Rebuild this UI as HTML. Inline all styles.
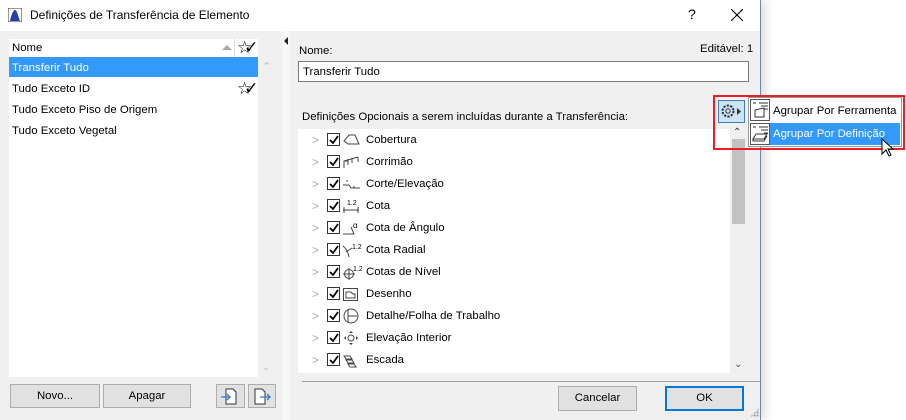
<!DOCTYPE html>
<html><head><meta charset="utf-8"><style>
*{margin:0;padding:0;box-sizing:border-box}
body{width:906px;height:420px;background:#fff;font-family:"Liberation Sans",sans-serif;font-size:11.4px;line-height:15px;color:#000;position:relative;overflow:hidden}
.a{position:absolute}
.win{left:0;top:0;width:761px;height:420px;background:#f0f0f0;border-right:1px solid #6d8aa6;box-shadow:4px 0 10px rgba(0,0,0,.15)}
.title{left:0;top:0;width:760px;height:31px;background:#fff}
.btn{position:absolute;background:#e1e1e1;border:1px solid #adadad;text-align:center}
.row{position:absolute;left:0;height:22px;width:420px}
.row .chev{position:absolute;left:14px;top:4px;color:#aaa;font-size:12px}
.row .cb{position:absolute;left:29px;top:4px;width:13px;height:13px;border:1px solid #333;background:#fff}
.row .cb svg{position:absolute;left:0;top:0}
.row .ic{position:absolute;left:44px;top:3px}
.row .t{position:absolute;left:68px;top:4px}
.star{font-size:17px;letter-spacing:-8px;line-height:1}
</style></head><body>
<div class="a win"></div>
<div class="a title"></div>
<svg class="a" style="left:8px;top:8px" width="14" height="14"><rect x="0" y="0" width="14" height="14" fill="#fff" stroke="#333"/><path d="M2 13 C4 4 6 2 7 2 C9 2 10 8 12 13Z" fill="#2a3ea8"/></svg>
<div class="a" style="left:30px;top:8px;font-size:12px">Definições de Transferência de Elemento</div>
<div class="a" style="left:688px;top:7px;font-size:14px">?</div>
<svg class="a" style="left:731px;top:9px" width="12" height="12"><path d="M0 0L12 12M12 0L0 12" stroke="#000" stroke-width="1.1"/></svg>

<div class="a" style="left:9px;top:39px;width:249px;height:338px;background:#fff"></div>
<div class="a" style="left:12px;top:41px">Nome</div>
<div class="a" style="left:222px;top:45px;width:0;height:0;border-left:5px solid transparent;border-right:5px solid transparent;border-bottom:5px solid #aaa"></div>
<div class="a" style="left:234px;top:39px;width:1px;height:18px;background:#ddd"></div>
<div class="a star" style="left:237px;top:39px">☆✓</div>
<div class="a" style="left:9px;top:57px;width:249px;height:20px;background:#3399ff"></div>
<div class="a" style="left:12px;top:61px;color:#fff">Transferir Tudo</div>
<div class="a" style="left:12px;top:82px">Tudo Exceto ID</div>
<div class="a star" style="left:237px;top:80px">☆✓</div>
<div class="a" style="left:12px;top:103px">Tudo Exceto Piso de Origem</div>
<div class="a" style="left:12px;top:124px">Tudo Exceto Vegetal</div>
<div class="a" style="left:262px;top:60px;color:#bbb;font-size:11px">⌃</div>
<div class="a" style="left:262px;top:360px;color:#bbb;font-size:10px">⌄</div>

<div class="btn" style="left:10px;top:384px;width:90px;height:24px;line-height:22px">Novo...</div>
<div class="btn" style="left:103px;top:384px;width:88px;height:24px;line-height:22px">Apagar</div>
<div class="btn" style="left:216px;top:384px;width:29px;height:24px"><svg width="27" height="22"><path d="M9 4h7l3 3v12H9z" fill="#fff" stroke="#333"/><path d="M4 12h9M10 9l3 3-3 3" stroke="#2a7ae2" fill="none" stroke-width="1.3"/></svg></div>
<div class="btn" style="left:248px;top:384px;width:28px;height:24px"><svg width="26" height="22"><path d="M6 4h7l3 3v12H6z" fill="#fff" stroke="#333"/><path d="M11 12h10M18 9l3 3-3 3" stroke="#2a7ae2" fill="none" stroke-width="1.3"/></svg></div>

<div class="a" style="left:282px;top:31px;width:8px;height:389px;background:#f7f7f7"></div>
<div class="a" style="left:284px;top:37px;width:0;height:0;border-top:4px solid transparent;border-bottom:4px solid transparent;border-right:4px solid #222"></div>

<div class="a" style="left:299px;top:44px">Nome:</div>
<div class="a" style="left:700px;top:42px">Editável: 1</div>
<div class="a" style="left:298px;top:61px;width:451px;height:21px;background:#fff;border:1px solid #7a7a7a"></div>
<div class="a" style="left:303px;top:65px">Transferir Tudo</div>
<div class="a" style="left:302px;top:110px">Definições Opcionais a serem incluídas durante a Transferência:</div>

<div class="a" style="left:298px;top:129px;width:448px;height:244px;background:#fff">
 <div class="a" style="left:432px;top:0;width:16px;height:244px;background:#f0f0f0"></div>
 <div class="a" style="left:434px;top:10px;width:13px;height:85px;background:#c2c2c2"></div>
 <div class="a" style="left:436px;top:228px;font-size:10px;color:#555">⌄</div>
</div>
<div class="a" style="left:298px;top:129px;width:432px;height:244px">
<div class="row" style="top:0"><span class="chev">&gt;</span><span class="cb"><svg width="12" height="12"><path d="M2 6l3 3 5-7" stroke="#000" stroke-width="1.8" fill="none"/></svg></span><svg class="ic" width="20" height="16"><path d="M2 9l5-6h6l4 9H6z" fill="none" stroke="#444"/></svg><span class="t">Cobertura</span></div>
<div class="row" style="top:22px"><span class="chev">&gt;</span><span class="cb"><svg width="12" height="12"><path d="M2 6l3 3 5-7" stroke="#000" stroke-width="1.8" fill="none"/></svg></span><svg class="ic" width="20" height="16"><path d="M2 14V7l14-4M2 7h4M6 5v6M10 4v5M16 3v5" fill="none" stroke="#444"/></svg><span class="t">Corrimão</span></div>
<div class="row" style="top:44px"><span class="chev">&gt;</span><span class="cb"><svg width="12" height="12"><path d="M2 6l3 3 5-7" stroke="#000" stroke-width="1.8" fill="none"/></svg></span><svg class="ic" width="20" height="16"><path d="M1 9h6l2 3h9M4 5h2M12 10v2" fill="none" stroke="#444"/></svg><span class="t">Corte/Elevação</span></div>
<div class="row" style="top:66px"><span class="chev">&gt;</span><span class="cb"><svg width="12" height="12"><path d="M2 6l3 3 5-7" stroke="#000" stroke-width="1.8" fill="none"/></svg></span><svg class="ic" width="20" height="16"><text x="5" y="7" font-size="7" font-family="Liberation Sans">1.2</text><path d="M1 12h16M2 9v6M16 9v6" stroke="#444"/></svg><span class="t">Cota</span></div>
<div class="row" style="top:88px"><span class="chev">&gt;</span><span class="cb"><svg width="12" height="12"><path d="M2 6l3 3 5-7" stroke="#000" stroke-width="1.8" fill="none"/></svg></span><svg class="ic" width="20" height="16"><path d="M1 14h11L9 7" fill="none" stroke="#444"/><text x="11" y="8" font-size="8">α</text></svg><span class="t">Cota de Ângulo</span></div>
<div class="row" style="top:110px"><span class="chev">&gt;</span><span class="cb"><svg width="12" height="12"><path d="M2 6l3 3 5-7" stroke="#000" stroke-width="1.8" fill="none"/></svg></span><svg class="ic" width="20" height="16"><path d="M1 4q5 4 6 11M4 10l6-4" fill="none" stroke="#444"/><text x="10" y="7" font-size="7">1.2</text></svg><span class="t">Cota Radial</span></div>
<div class="row" style="top:132px"><span class="chev">&gt;</span><span class="cb"><svg width="12" height="12"><path d="M2 6l3 3 5-7" stroke="#000" stroke-width="1.8" fill="none"/></svg></span><svg class="ic" width="20" height="16"><circle cx="7" cy="10" r="4.5" fill="none" stroke="#444"/><path d="M1 10h12M7 4v12" stroke="#444"/><text x="11" y="7" font-size="7">1.2</text></svg><span class="t">Cotas de Nível</span></div>
<div class="row" style="top:154px"><span class="chev">&gt;</span><span class="cb"><svg width="12" height="12"><path d="M2 6l3 3 5-7" stroke="#000" stroke-width="1.8" fill="none"/></svg></span><svg class="ic" width="20" height="16"><rect x="1.5" y="2.5" width="14" height="12" fill="none" stroke="#444"/><path d="M4 12V6h5l2 2h2v4z" fill="none" stroke="#444"/></svg><span class="t">Desenho</span></div>
<div class="row" style="top:176px"><span class="chev">&gt;</span><span class="cb"><svg width="12" height="12"><path d="M2 6l3 3 5-7" stroke="#000" stroke-width="1.8" fill="none"/></svg></span><svg class="ic" width="20" height="16"><circle cx="9" cy="8" r="7" fill="none" stroke="#444"/><path d="M6 1.5v13M6 8h9" stroke="#444"/></svg><span class="t">Detalhe/Folha de Trabalho</span></div>
<div class="row" style="top:198px"><span class="chev">&gt;</span><span class="cb"><svg width="12" height="12"><path d="M2 6l3 3 5-7" stroke="#000" stroke-width="1.8" fill="none"/></svg></span><svg class="ic" width="20" height="16"><circle cx="9" cy="8" r="3" fill="none" stroke="#444"/><path d="M9 1l-2 2h4zM9 15l-2-2h4zM2 8l2-2v4zM16 8l-2-2v4z" fill="#444"/></svg><span class="t">Elevação Interior</span></div>
<div class="row" style="top:220px"><span class="chev">&gt;</span><span class="cb"><svg width="12" height="12"><path d="M2 6l3 3 5-7" stroke="#000" stroke-width="1.8" fill="none"/></svg></span><svg class="ic" width="20" height="16"><path d="M2 4h6l2 3h-6zM4 8h6l2 3H6zM6 12h6l2 3H8z" fill="none" stroke="#444"/></svg><span class="t">Escada</span></div>
</div>

<div class="a" style="left:302px;top:381px;width:458px;height:1px;background:#a0a0a0"></div>
<div class="btn" style="left:558px;top:386px;width:79px;height:25px;line-height:23px">Cancelar</div>
<div class="btn" style="left:665px;top:386px;width:79px;height:25px;line-height:21px;border:2px solid #0078d7">OK</div>

<div class="a" style="left:713px;top:95px;width:192px;height:55px;border:2px solid #ee1c24"></div>
<div class="a" style="left:718px;top:100px;width:27px;height:23px;background:#cce4f7;border:1px solid #3c7fb1"></div>
<svg class="a" style="left:720px;top:103px" width="24" height="17"><circle cx="8" cy="8" r="5.5" fill="none" stroke="#333" stroke-dasharray="2.2 1.3" stroke-width="2"/><circle cx="8" cy="8" r="2.2" fill="none" stroke="#333"/><path d="M17 5l4 3.5-4 3.5z" fill="#333"/></svg>
<div class="a" style="left:733px;top:125px;color:#333;font-size:10px">⌃</div>
<div class="a" style="left:748px;top:97px;width:154px;height:50px;background:#fff;border:1px solid #999"></div>
<div class="a" style="left:750px;top:99px;width:20px;height:22px;border:1px solid #555;background:#fff"></div>
<svg class="a" style="left:751px;top:101px" width="19" height="19"><path d="M2 2h3M8 2h9M10 5h7M13 8h4M4 9l9-2v9H4z" fill="none" stroke="#333"/></svg>
<div class="a" style="left:773px;top:104px">Agrupar Por Ferramenta</div>
<div class="a" style="left:750px;top:123px;width:150px;height:22px;background:#3399ff"></div>
<div class="a" style="left:750px;top:123px;width:20px;height:22px;border:1px solid #555;background:#fff"></div>
<svg class="a" style="left:751px;top:125px" width="19" height="19"><path d="M2 2h3M8 2h9M10 5h7M13 8h4M5 9h11l-3 5H2zM2 14v2h11l3-5" fill="none" stroke="#333"/></svg>
<div class="a" style="left:773px;top:127px;color:#fff">Agrupar Por Definição</div>
<svg class="a" style="left:881px;top:138px" width="13" height="20"><path d="M1 1v15l4-4 3 6 2-1-3-6h5z" fill="#fff" stroke="#000"/></svg>
<div class="a" style="left:750px;top:408px;width:9px;height:9px;background:radial-gradient(circle,#999 1px,transparent 1.2px) 0 0/3px 3px;clip-path:polygon(100% 0,100% 100%,0 100%)"></div>
</body></html>
